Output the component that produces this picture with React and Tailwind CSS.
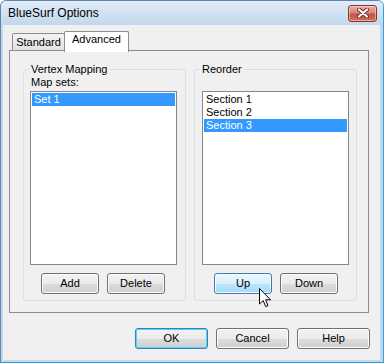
import React from 'react';

const btnBase =
  'h-[21px] rounded-[3px] border flex items-center justify-center text-[11px] leading-none text-black';
const btnNormal =
  'border-[#707070] bg-[linear-gradient(#f2f2f2_0%,#ebebeb_50%,#dddddd_50%,#cfcfcf_100%)] shadow-[inset_0_0_0_1px_#fcfcfc]';
const btnHot =
  'border-[#3c7fb1] bg-[linear-gradient(#eaf6fd_0%,#d9f0fc_50%,#bee6fd_50%,#a7d9f5_100%)] shadow-[inset_0_0_0_1px_#f4fbfe]';
const btnDefault =
  'border-[#3c7fb1] bg-[linear-gradient(#f2f2f2_0%,#ebebeb_50%,#dddddd_50%,#cfcfcf_100%)] shadow-[inset_0_0_0_1px_#48d8fb]';

function Button({ children, width, kind = 'normal' }) {
  const look = kind === 'hot' ? btnHot : kind === 'default' ? btnDefault : btnNormal;
  return (
    <div className={`${btnBase} ${look} ${width}`}>
      {children}
    </div>
  );
}

function ListBox({ items, selected }) {
  return (
    <div className="w-[147px] h-[174px] border border-[#828790] bg-white p-[1px]">
      {items.map((item, i) => (
        <div
          key={item}
          className={`leading-[13px] px-[2px] ${i === selected ? 'bg-[#3399ff] text-white' : 'text-black'}`}
        >
          {item}
        </div>
      ))}
    </div>
  );
}

function GroupBox({ title, children }) {
  return (
    <fieldset className="w-[163px] h-[238px] border border-[#d5dfe5] rounded-[3px] p-0 m-0 min-w-0">
      <legend className="ml-[5px] px-[2px] leading-[13px] text-[11px]">{title}</legend>
      {children}
    </fieldset>
  );
}

function CloseButton() {
  return (
    <div className="w-[29px] h-[17px] rounded-[3px] border border-[#7a3a36] bg-[linear-gradient(#eab0a6_0%,#d88376_45%,#c75446_55%,#d26c59_100%)] shadow-[inset_0_0_0_1px_rgba(255,220,210,0.55)] flex items-center justify-center">
      <svg width="12" height="10" viewBox="0 0 12 10">
        <path d="M2 1.5 L10 8.5 M10 1.5 L2 8.5" stroke="#6b2b27" strokeWidth="4" strokeLinecap="round" />
        <path d="M2 1.5 L10 8.5 M10 1.5 L2 8.5" stroke="#ffffff" strokeWidth="2.2" strokeLinecap="round" />
      </svg>
    </div>
  );
}

function Cursor() {
  return (
    <svg className="absolute left-[258px] top-[287px]" width="13" height="20" viewBox="0 0 13 20">
      <path
        d="M0.5 0.5 L0.5 16 L4.2 12.6 L6.7 18.6 L9 17.6 L6.6 11.8 L11.5 11.8 Z"
        fill="#ffffff"
        stroke="#000000"
        strokeWidth="1"
        strokeLinejoin="miter"
      />
    </svg>
  );
}

export default function App() {
  return (
    <div className="w-[384px] h-[363px] bg-white font-['Liberation_Sans',Arial,sans-serif] text-[11px] text-black">
      <div className="relative w-full h-full flex flex-col bg-[#c4d7ed] border border-[#5b87b3] border-r-[#2aa3e8] border-b-[#2aa3e8] rounded-t-[6px] overflow-hidden">
        {/* title bar */}
        <div className="h-[24px] flex items-center justify-between pl-[7px] pr-[6px] bg-[linear-gradient(#e3ecf7_0%,#d2e1f2_50%,#c4d7ed_100%)]">
          <span className="text-[12px] leading-none text-black">BlueSurf Options</span>
          <CloseButton />
        </div>

        {/* client area */}
        <div className="flex-1 ml-[2px] mr-[3px] mb-[2px] bg-[#f0f0f0] flex flex-col">
          {/* tabs */}
          <div className="pt-[6px] ml-[9px] h-[25px] flex items-end">
            <div className="w-[53px] h-[17px] border border-b-0 border-[#898c95] rounded-t-[2px] bg-[linear-gradient(#f3f3f3,#e3e3e3)] flex justify-center pt-[2px] leading-[13px]">
              Standard
            </div>
            <div className="relative z-10 -ml-[1px] -mb-[2px] w-[65px] h-[21px] border border-b-0 border-[#898c95] rounded-t-[2px] bg-white flex justify-center pt-[1px] leading-[13px]">
              Advanced
            </div>
          </div>

          {/* tab panel */}
          <div className="ml-[6px] w-[360px] h-[263px] border border-[#898c95] bg-[#f0f0f0] pt-[12px] pl-[13px] flex gap-[8px]">
            <GroupBox title="Vertex Mapping">
              <div className="pl-[6px] flex flex-col">
                <div className="pl-[1px] leading-[13px]">Map sets:</div>
                <div className="mt-[2px]">
                  <ListBox items={['Set 1']} selected={0} />
                </div>
                <div className="mt-[8px] ml-[11px] flex gap-[8px]">
                  <Button width="w-[58px]">Add</Button>
                  <Button width="w-[58px]">Delete</Button>
                </div>
              </div>
            </GroupBox>
            <GroupBox title="Reorder">
              <div className="pl-[7px] flex flex-col">
                <div className="mt-[15px]">
                  <ListBox items={['Section 1', 'Section 2', 'Section 3']} selected={2} />
                </div>
                <div className="mt-[8px] ml-[12px] flex gap-[8px]">
                  <Button width="w-[58px]" kind="hot">Up</Button>
                  <Button width="w-[58px]">Down</Button>
                </div>
              </div>
            </GroupBox>
          </div>

          {/* dialog buttons */}
          <div className="mt-[15px] pr-[10px] flex justify-end gap-[8px]">
            <Button width="w-[73px]" kind="default">OK</Button>
            <Button width="w-[73px]">Cancel</Button>
            <Button width="w-[73px]">Help</Button>
          </div>
        </div>

        <Cursor />
      </div>
    </div>
  );
}
